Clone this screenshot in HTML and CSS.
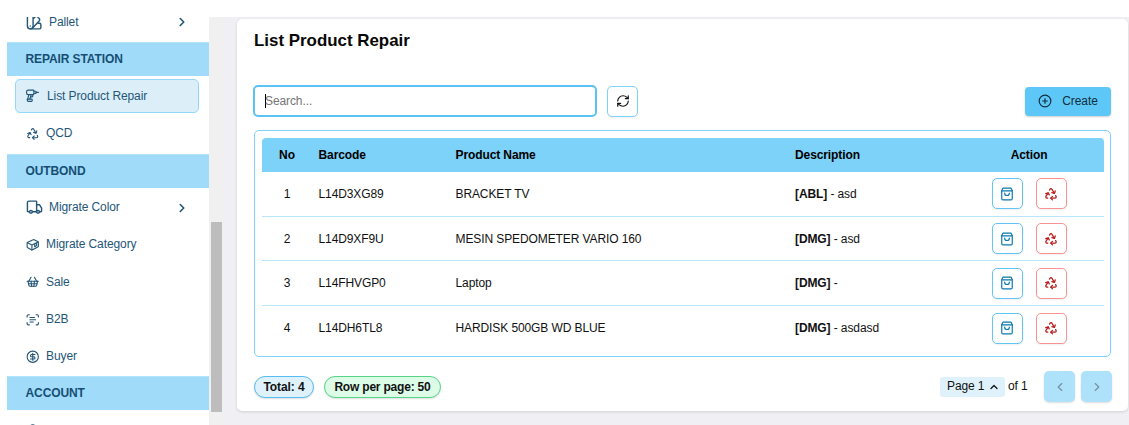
FILE: index.html
```html
<!DOCTYPE html>
<html lang="en">
<head>
<meta charset="utf-8">
<title>List Product Repair</title>
<link rel="stylesheet" href="styles.css">
</head>
<body>
<svg class="defs" width="0" height="0">
  <symbol id="right" viewBox="0 0 24 24"><path d="m9 18 6-6-6-6"/></symbol>
  <symbol id="left" viewBox="0 0 24 24"><path d="m15 18-6-6 6-6"/></symbol>
  <symbol id="up" viewBox="0 0 24 24"><path d="m18 15-6-6-6 6"/></symbol>
  <symbol id="swatch" viewBox="0 0 24 24"><path d="M2 2v15a4 4 0 0 0 4 4h13a2 2 0 0 0 2-2v-4a2 2 0 0 0-2-2h-2"/><path d="M6 17h.01M10 3v14a4 4 0 0 1-4 4"/><path d="m11 6 2-2a2.400 2.400 0 0 1 3.400 0l2.200 2.500a2.400 2.400 0 0 1 0 3.400L9 20"/></symbol>
  <symbol id="drill" viewBox="0 0 24 24"><path d="M14 9c0 .6-.4 1-1 1H4c-1.7 0-3-1.3-3-3V5c0-1.700 1.300-3 3-3h9c.6 0 1 .4 1 1Z"/><path d="M18 6h4"/><path d="M14 4h3a1 1 0 0 1 1 1v2a1 1 0 0 1-1 1h-3"/><path d="m5 10-2 8"/><path d="M12 10v3c0 .6-.4 1-1 1H8"/><path d="m7 18 2-8"/><path d="M5 22c-1.700 0-3-1.300-3-3 0-.6.400-1 1-1h7c.6 0 1 .4 1 1v2c0 .6-.4 1-1 1Z"/></symbol>
  <symbol id="recycle" viewBox="0 0 24 24"><path d="m14.500 16-3 3 3 3"/><path d="M12 19h7a2 2 0 0 0 1.750-2.750l-.8-1.500"/><path d="M9 13.500 7.200 10 3 11.500"/><path d="m7 10.500-3.700 5.600a2 2 0 0 0 1.500 2.860h1.700"/><path d="m13.500 9.500 4.500 1.500 1.200-4.200"/><path d="m17.500 10.500-3.800-6.600a2 2 0 0 0-3.260-.14l-1 1.500"/></symbol>
  <symbol id="truck" viewBox="0 0 24 24"><path d="M5 18H3a1 1 0 0 1-1-1V5a2 2 0 0 1 2-2h10a1 1 0 0 1 1 1v14H9"/><path d="M15 8h4l3 5v4a1 1 0 0 1-1 1h-2"/><circle cx="7" cy="18" r="2"/><circle cx="17" cy="18" r="2"/></symbol>
  <symbol id="package" viewBox="0 0 24 24"><path d="M2 9.500v6.200a2 2 0 0 0 1.100 1.800l6.500 3.400a2 2 0 0 0 1.900 0l9.400-5a2 2 0 0 0 1.100-1.800V8.200a2 2 0 0 0-1.100-1.800l-6.400-3.200a2 2 0 0 0-1.800 0L3.100 7.700A2 2 0 0 0 2 9.500Z"/><path d="m2.500 8.500 8 4 11-5.500M10.500 12.500V21M15.500 10.500v5l3.500-2V8.500"/></symbol>
  <symbol id="basket" viewBox="0 0 24 24"><path d="m15 11-1 9"/><path d="m19 11-4-7"/><path d="M2 11h20"/><path d="m3.500 11 1.600 7.400a2 2 0 0 0 2 1.600h9.800a2 2 0 0 0 2-1.600l1.700-7.400"/><path d="M4.500 15.500h15"/><path d="m5 11 4-7"/><path d="m9 11 1 9"/></symbol>
  <symbol id="scan" viewBox="0 0 24 24"><path d="M2 7V5a2 2 0 0 1 2-2h2M18 3h2a2 2 0 0 1 2 2v2M22 17v2a2 2 0 0 1-2 2h-2M6 21H4a2 2 0 0 1-2-2v-2M7 8h8M7 12h10M7 16h6"/></symbol>
  <symbol id="dollar" viewBox="0 0 24 24"><circle cx="12" cy="12" r="10"/><path d="M16 8h-6a2 2 0 1 0 0 4h4a2 2 0 1 1 0 4H8M12 18V6"/></symbol>
  <symbol id="user" viewBox="0 0 24 24"><circle cx="12" cy="7" r="4"/><path d="M5 22v-2a4 4 0 0 1 4-4h6a4 4 0 0 1 4 4v2"/></symbol>
  <symbol id="refresh" viewBox="0 0 24 24"><path d="M3 12a9 9 0 0 1 9-9 9.750 9.750 0 0 1 6.740 2.740L21 8"/><path d="M21 3v5h-5"/><path d="M21 12a9 9 0 0 1-9 9 9.750 9.750 0 0 1-6.740-2.740L3 16"/><path d="M8 16H3v5"/></symbol>
  <symbol id="plus" viewBox="0 0 24 24"><circle cx="12" cy="12" r="10"/><path d="M8 12h8M12 8v8"/></symbol>
  <symbol id="bag" viewBox="0 0 24 24"><path d="M5 2h14l2 4v14a2 2 0 0 1-2 2H5a2 2 0 0 1-2-2V6Z"/><path d="M3 6.500h18"/><path d="M16 10.500a4 4 0 0 1-8 0"/></symbol>
</svg>
<div class="app">
  <nav class="sidebar">
    <div class="item wide first"><svg class="icon"><use href="#swatch"/></svg><span>Pallet</span><svg class="chevron"><use href="#right"/></svg></div>
    <h2 class="section">REPAIR STATION</h2>
    <div class="item active"><svg class="icon"><use href="#drill"/></svg><span>List Product Repair</span></div>
    <div class="item"><svg class="icon"><use href="#recycle"/></svg><span>QCD</span></div>
    <h2 class="section">OUTBOND</h2>
    <div class="item wide"><svg class="icon"><use href="#truck"/></svg><span>Migrate Color</span><svg class="chevron"><use href="#right"/></svg></div>
    <div class="item"><svg class="icon"><use href="#package"/></svg><span>Migrate Category</span></div>
    <div class="item"><svg class="icon"><use href="#basket"/></svg><span>Sale</span></div>
    <div class="item"><svg class="icon"><use href="#scan"/></svg><span>B2B</span></div>
    <div class="item"><svg class="icon"><use href="#dollar"/></svg><span>Buyer</span></div>
    <h2 class="section account">ACCOUNT</h2>
    <div class="item last"><svg class="icon"><use href="#user"/></svg></div>
  </nav>
  <div class="scrollbar"><div class="thumb"></div></div>
  <main class="main">
    <section class="card">
      <h1>List Product Repair</h1>
      <div class="toolbar">
        <div class="search"><i class="caret"></i>Search...</div>
        <button class="btn"><svg><use href="#refresh"/></svg></button>
        <button class="create"><svg><use href="#plus"/></svg>Create</button>
      </div>
      <div class="table">
        <div class="row head"><span>No</span><span>Barcode</span><span>Product Name</span><span>Description</span><span>Action</span></div>
        <div class="row"><span>1</span><span>L14D3XG89</span><span>BRACKET TV</span><span><b>[ABL]</b> - asd</span><div class="actions"><button class="btn blue"><svg><use href="#bag"/></svg></button><button class="btn red"><svg><use href="#recycle"/></svg></button></div></div>
        <div class="row"><span>2</span><span>L14D9XF9U</span><span>MESIN SPEDOMETER VARIO 160</span><span><b>[DMG]</b> - asd</span><div class="actions"><button class="btn blue"><svg><use href="#bag"/></svg></button><button class="btn red"><svg><use href="#recycle"/></svg></button></div></div>
        <div class="row"><span>3</span><span>L14FHVGP0</span><span>Laptop</span><span><b>[DMG]</b> -</span><div class="actions"><button class="btn blue"><svg><use href="#bag"/></svg></button><button class="btn red"><svg><use href="#recycle"/></svg></button></div></div>
        <div class="row"><span>4</span><span>L14DH6TL8</span><span>HARDISK 500GB WD BLUE</span><span><b>[DMG]</b> - asdasd</span><div class="actions"><button class="btn blue"><svg><use href="#bag"/></svg></button><button class="btn red"><svg><use href="#recycle"/></svg></button></div></div>
      </div>
      <footer class="footer">
        <span class="pill total">Total: 4</span>
        <span class="pill perpage">Row per page: 50</span>
        <span class="page">Page 1<svg><use href="#up"/></svg></span>
        <span class="of">of 1</span>
        <button class="nav"><svg><use href="#left"/></svg></button>
        <button class="nav"><svg><use href="#right"/></svg></button>
      </footer>
    </section>
  </main>
</div>
</body>
</html>
```
FILE: styles.css
```css
* { box-sizing: border-box; }
body { margin: 0; height: 425px; overflow: hidden; background: #fff; color: #111; font: 12px/17px "Liberation Sans", Arial, sans-serif; letter-spacing: -0.1px; }
.defs { position: absolute; }
svg { flex: none; fill: none; stroke: currentColor; stroke-width: 2; stroke-linecap: round; stroke-linejoin: round; }
button { margin: 0; font: inherit; letter-spacing: inherit; padding: 0; display: flex; align-items: center; justify-content: center; }
.app { display: flex; height: 425px; padding: 17px 0 0 7px; }
.sidebar { width: 202px; height: 408px; flex: none; overflow: hidden; color: #245678; }
.item { display: flex; align-items: center; height: 34px; margin: 3.2px 10px 3.2px 8px; padding-left: 11px; border: 1px solid transparent; border-radius: 5px; }
.item + .item { margin-top: 0; }
.item .icon { width: 13.500px; height: 13.500px; margin: 0 7px 0 -1.500px; }
.item.wide .icon { width: 17px; height: 17px; margin: 0 6px 0 -1px; }
.item.first { height: 10px; margin: 0 10px 15px 8px; border-width: 0 1px; line-height: 10px; }
.item.active { background: #dceff9; border-color: #91d8fa; }
.item.active .icon { margin-right: 8px; }
.item.last { margin-top: 2.5px; }
.item .chevron { width: 14px; height: 14px; margin: 0 9px 0 auto; stroke-width: 2.8; }
.section { margin: 0; height: 34px; padding-left: 18.500px; background: #a0dcfa; border-top: 1px solid #b2e5fb; color: #164e73; font-size: 12px; line-height: 33px; }
.section.account { margin-top: -4px; }
.item + .section.account { margin-top: -0.800px; }
.scrollbar { width: 14px; flex: none; background: #f0f0f0; padding: 205px 1px 0 2px; }
.thumb { height: 190px; background: #bdbdbd; }
.main { flex: 1; background: #efeff4; padding: 2px 1px 0 14px; }
.card { height: 392px; background: #fff; border-radius: 5px; box-shadow: 0 1px 3px #0002; padding: 13px 17px 0 17px; }
h1 { margin: 0; color: #080808; font-size: 16.900px; line-height: 18px; height: 36px; letter-spacing: 0; }
.toolbar { display: flex; align-items: center; height: 34px; margin-top: 16px; }
.search { display: flex; align-items: center; width: 344px; height: 32px; margin-left: -1px; padding-left: 10px; border: 2px solid #5bc3f3; border-radius: 5px; color: #757575; margin-right: 10px; }
.caret { width: 1px; height: 14px; margin-right: -1px; background: #000; }
.btn { width: 31px; height: 31px; background: #fff; border: 1px solid #7dd3fc; border-radius: 5px; box-shadow: 0 1px 2px #0001; color: #111; }
.btn svg { width: 14px; height: 14px; }
.create { width: 86px; height: 29px; margin-left: auto; background: #5dc8f7; border: 0; border-radius: 4px; box-shadow: 0 1px 2px #0003; color: #102d3d; gap: 10px; }
.create svg { width: 14px; height: 14px; }
.table { height: 227px; margin-top: 12px; border: 1px solid #7dd3fc; border-radius: 5px; padding: 7px 6px 0 7px; }
.row { display: grid; grid-template-columns: 50px 143.500px 339.5px 158px 151px; align-items: center; height: 44.700px; border-bottom: 1px solid #bae6fd; }
.row:last-child { border: 0; }
.row > span { padding-top: 1px; }
.row > span:first-child { text-align: center; }
.row > span:nth-child(2) { padding-left: 6.500px; }
.head { height: 34px; background: #7dd2fa; border: 0; border-radius: 4px 4px 0 0; font-weight: bold; color: #000; }
.row.head > span { padding-top: 0; }
.head > span:last-child { text-align: center; padding-left: 1px; }
.actions { display: flex; justify-content: center; gap: 13px; padding-left: 1px; }
.blue { color: #0878ae; border-color: #62c5f4; }
.red { color: #b91c1c; border-color: #f99292; }
.red svg { stroke-width: 2.2; }
.footer { display: flex; align-items: center; height: 31px; margin: 14px -1px 0 0; }
.pill { height: 22px; border: 1px solid; border-radius: 11px; line-height: 20px; text-align: center; font-weight: bold; box-shadow: 0 1px 2px #0002; }
.total { width: 60px; background: #dff2fc; border-color: #56bdf1; }
.perpage { width: 117px; margin-left: 10px; background: #dcfce7; border-color: #57d587; letter-spacing: -0.2px; }
.page { display: flex; align-items: center; gap: 4px; width: 65px; height: 20px; margin-left: auto; padding-left: 7px; background: #dff2fb; border-radius: 3px; }
.page svg { width: 12px; height: 12px; stroke-width: 2.5; }
.of { width: 36px; padding-left: 3px; margin-right: 3px; }
.nav { width: 31px; height: 31px; border: 0; border-radius: 5px; background: #aee2fb; color: #778f9b; box-shadow: 0 1px 2px #0002; }
.nav + .nav { margin-left: 6px; }
.nav svg { width: 14px; height: 14px; }
```
